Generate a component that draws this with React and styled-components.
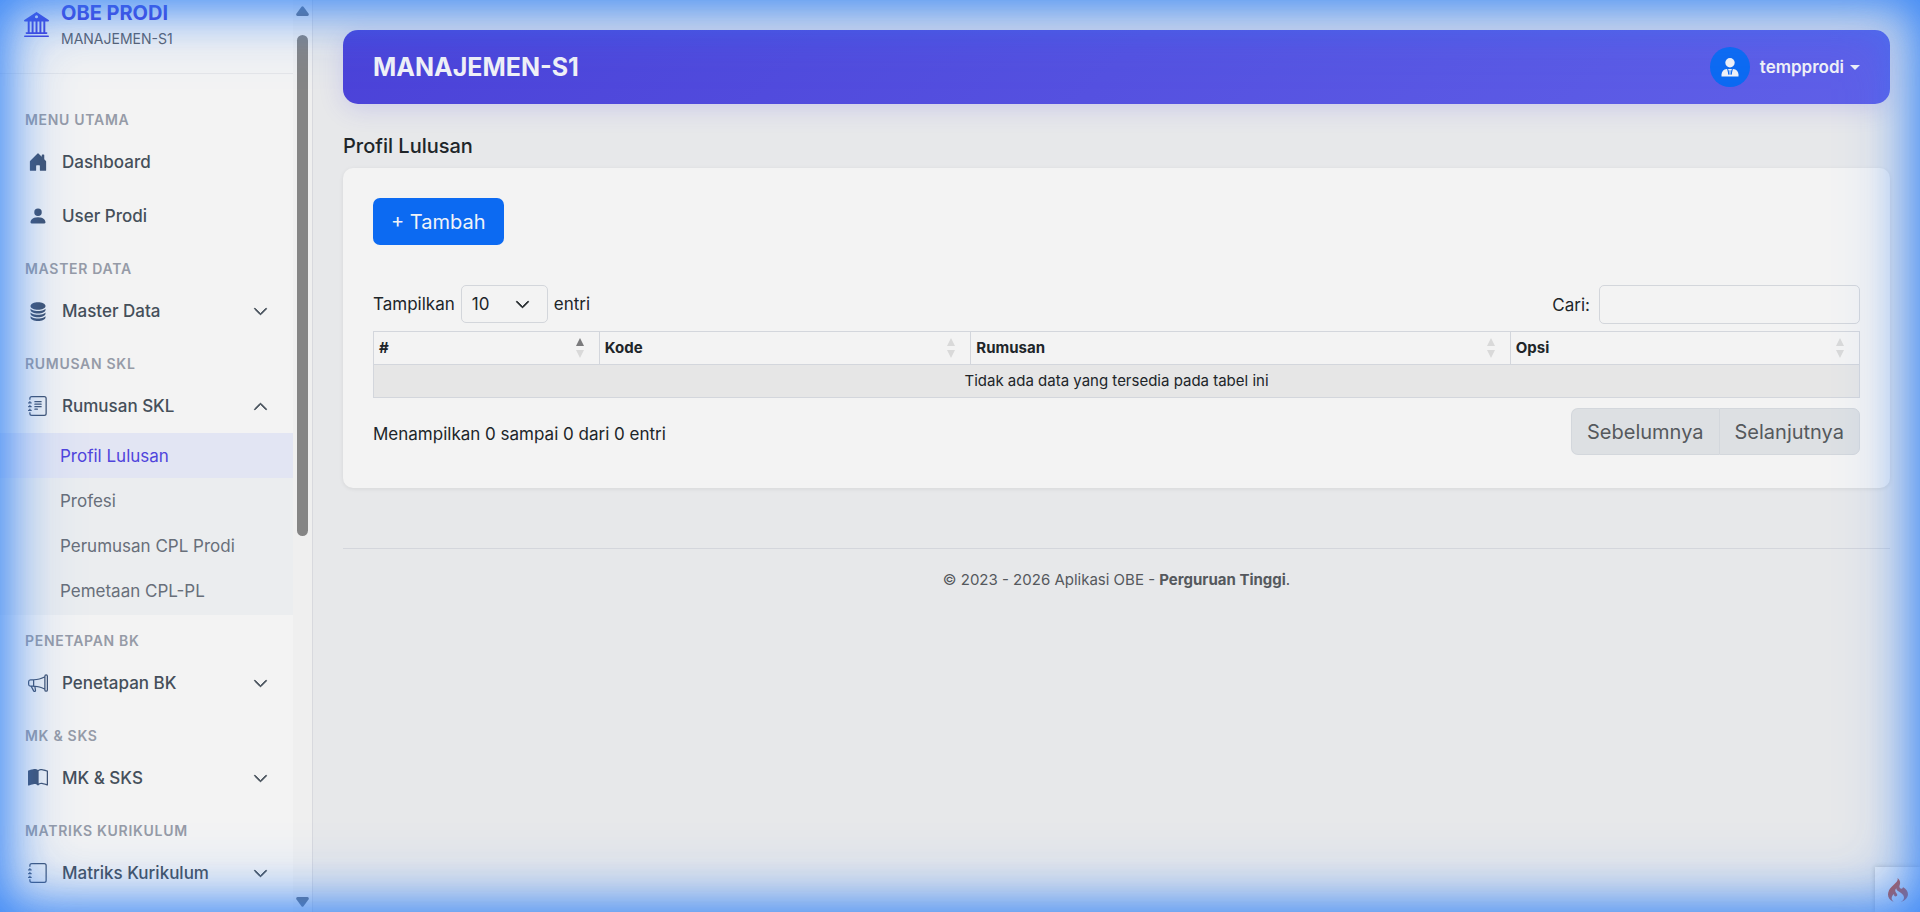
import React from 'react';
import styled, { createGlobalStyle } from 'styled-components';
import {
  BsBank2,
  BsBookHalf,
  BsChevronDown,
  BsChevronUp,
  BsDatabaseFill,
  BsHouseDoorFill,
  BsJournal,
  BsJournalText,
  BsMegaphone,
  BsPersonFill,
} from 'react-icons/bs';
import { SiCodeigniter } from 'react-icons/si';

const GlobalStyle = createGlobalStyle`
  * {
    box-sizing: border-box;
  }

  body {
    margin: 0;
    background: #e7e8ea;
    color: #202529;
    font-family: Inter, "Liberation Sans", sans-serif;
    font-size: 17px;
    line-height: 26px;
  }

  button,
  input,
  select {
    font: inherit;
    color: inherit;
  }

  a {
    color: inherit;
    text-decoration: none;
  }
`;

const Layout = styled.div`
  display: flex;
  align-items: flex-start;
  min-height: 100vh;
`;

const Glow = styled.div`
  position: fixed;
  inset: 0;
  z-index: 20;
  pointer-events: none;
  box-shadow:
    inset 0 0 75px rgba(50, 130, 246, 0.7),
    inset 0 0 46px rgba(50, 130, 246, 0.9);
`;

/* Sidebar */

const Sidebar = styled.aside`
  position: sticky;
  top: 0;
  display: flex;
  flex: 0 0 313px;
  height: 100vh;
  overflow: hidden;
  background: #f3f3f3;
  border-right: 1px solid #d8d9de;
`;

const SidebarContent = styled.div`
  flex: 1;
  display: flex;
  flex-direction: column;
  overflow: hidden;
`;

const Brand = styled.div`
  display: flex;
  flex: 0 0 74px;
  align-items: flex-start;
  gap: 12px;
  padding: 0 24px;
  border-bottom: 1px solid #e5e6e8;
  color: #4338d9;

  svg {
    flex: none;
    margin-top: 12px;
  }
`;

const BrandName = styled.strong`
  display: block;
  font-size: 20px;
  font-weight: 700;
  line-height: 26px;
`;

const BrandUnit = styled.small`
  display: block;
  color: #5b616b;
  font-size: 14px;
  line-height: 26px;
`;

const Nav = styled.nav`
  padding-top: 20px;
`;

const NavLabel = styled.div`
  padding: 16px 25px 5px;
  color: #969ba7;
  font-size: 14px;
  font-weight: 600;
  letter-spacing: 0.05em;
  line-height: 20px;
  text-transform: uppercase;
`;

const NavLink = styled.a`
  display: flex;
  align-items: center;
  gap: 12px;
  height: 54px;
  padding: 0 25px;
  color: #454f5a;
  font-weight: 500;
`;

const NavIcon = styled.span`
  display: flex;
  justify-content: center;
  width: 25px;
  color: #41526e;
  font-size: 20px;
`;

const NavText = styled.span`
  flex: 1;
`;

const SubMenu = styled.div`
  padding-bottom: 2px;
  background: #ebedef;
`;

const SubLink = styled.a`
  display: flex;
  align-items: center;
  height: 45px;
  padding-left: 60px;
  background: ${({ $active }) => ($active ? '#e2e5f3' : 'transparent')};
  color: ${({ $active }) => ($active ? '#5044dc' : '#686f7a')};
`;

const ScrollRail = styled.div`
  display: flex;
  flex: 0 0 19px;
  flex-direction: column;
  align-items: center;
  padding: 6px 0 5px;
  background: #efefef;
`;

const ScrollArrow = styled.svg`
  flex: none;
  width: 13px;
  height: 10px;
  fill: #68707c;
`;

const ScrollTrack = styled.div`
  flex: 1;
  width: 11px;
  padding: 19px 0;
`;

const ScrollThumb = styled.div`
  height: 59.4%;
  border-radius: 6px;
  background: #858585;
`;

/* Main column */

const Main = styled.main`
  flex: 1;
  min-width: 0;
  padding: 30px;
`;

const Topbar = styled.header`
  display: flex;
  align-items: center;
  justify-content: space-between;
  height: 74px;
  padding: 0 30px;
  border-radius: 15px;
  background: linear-gradient(135deg, #4b42d8, #5f60e8);
  box-shadow: 0 5px 25px rgba(79, 70, 229, 0.18);
  color: #f2f2f7;
`;

const TopbarTitle = styled.h1`
  margin: 0;
  font-size: 25px;
  font-weight: 700;
  line-height: 30px;
`;

const UserButton = styled.button`
  display: flex;
  align-items: center;
  padding: 0;
  border: 0;
  background: none;
  font-weight: 600;
  cursor: pointer;
`;

const Avatar = styled.span`
  display: flex;
  align-items: center;
  justify-content: center;
  width: 40px;
  height: 40px;
  margin-right: 10px;
  border-radius: 50%;
  background: #0c6af2;
`;

const Caret = styled.span`
  margin-left: 6px;
  border-top: 5px solid;
  border-right: 5px solid transparent;
  border-left: 5px solid transparent;
`;

const PageTitle = styled.h2`
  margin: 30px 0 9px;
  font-size: 20px;
  font-weight: 500;
  line-height: 25px;
`;

const Card = styled.section`
  padding: 30px;
  border-radius: 10px;
  background: #f3f3f3;
  box-shadow: 0 1px 4px rgba(0, 0, 0, 0.08);
`;

const AddButton = styled.button`
  height: 47px;
  padding: 0 18px;
  border: 0;
  border-radius: 7px;
  background: #0c6af2;
  color: #f0f3f8;
  font-size: 20px;
  cursor: pointer;
`;

const TableBar = styled.div`
  display: flex;
  align-items: flex-start;
  justify-content: space-between;
  margin: 40px 0 7px;
`;

const Field = styled.label`
  display: flex;
  align-items: center;
  gap: ${({ $gap }) => $gap}px;
`;

const SelectBox = styled.span`
  display: grid;
  align-items: center;

  select,
  svg {
    grid-area: 1 / 1;
  }

  svg {
    justify-self: end;
    margin-right: 18px;
    pointer-events: none;
  }
`;

const LengthSelect = styled.select`
  width: 87px;
  height: 38px;
  padding: 0 10px;
  appearance: none;
  border: 1px solid #d3d6db;
  border-radius: 5px;
  background: transparent;
`;

const SearchInput = styled.input`
  width: 261px;
  height: 39px;
  padding: 0 10px;
  border: 1px solid #d3d6db;
  border-radius: 5px;
  background: transparent;
`;

const Table = styled.table`
  width: 100%;
  border-collapse: collapse;
  table-layout: fixed;
  font-size: 15px;
  line-height: 22px;

  th,
  td {
    padding: 5px;
    border: 1px solid #d3d6dc;
  }

  td {
    background: #e6e6e6;
    text-align: center;
  }
`;

const HeadCell = styled.th`
  width: ${({ $width }) => $width};
  font-weight: 700;
  text-align: left;
`;

const HeadInner = styled.div`
  display: flex;
  align-items: center;
  justify-content: space-between;
  padding-right: 10px;
`;

const SortMark = styled.svg`
  width: 8px;
  height: 20px;
  fill: #d9d9d9;

  .active {
    fill: #7a7a7c;
  }
`;

const TableFoot = styled.div`
  display: flex;
  align-items: center;
  justify-content: space-between;
  margin: 10px 0 3px;
`;

const TableInfo = styled.div`
  padding-top: 4px;
`;

const Pager = styled.div`
  display: flex;
`;

const PageButton = styled.button`
  height: 47px;
  padding: 0 15px;
  border: 1px solid #d3d7dc;
  background: #dde0e3;
  color: #55595d;
  font-size: 20px;

  &:first-child {
    border-right: 0;
    border-radius: 7px 0 0 7px;
  }

  &:last-child {
    border-radius: 0 7px 7px 0;
  }
`;

const Footer = styled.footer`
  margin-top: 60px;
  padding-top: 18px;
  border-top: 1px solid #d4d6dc;
  color: #55585d;
  font-size: 15px;
  text-align: center;

  strong {
    font-weight: 700;
  }
`;

const DebugButton = styled.button`
  position: fixed;
  right: 0;
  bottom: 0;
  display: flex;
  align-items: center;
  justify-content: center;
  width: 45px;
  height: 45px;
  padding: 0;
  border: 0;
  background: #f3f3f3;
  box-shadow: 0 0 5px rgba(0, 0, 0, 0.2);
  color: #dd4814;
  font-size: 24px;
`;

const menu = [
  {
    label: 'Menu Utama',
    items: [
      { text: 'Dashboard', icon: BsHouseDoorFill },
      { text: 'User Prodi', icon: BsPersonFill },
    ],
  },
  {
    label: 'Master Data',
    items: [{ text: 'Master Data', icon: BsDatabaseFill, collapsible: true }],
  },
  {
    label: 'Rumusan SKL',
    items: [
      {
        text: 'Rumusan SKL',
        icon: BsJournalText,
        collapsible: true,
        children: ['Profil Lulusan', 'Profesi', 'Perumusan CPL Prodi', 'Pemetaan CPL-PL'],
      },
    ],
  },
  {
    label: 'Penetapan BK',
    items: [{ text: 'Penetapan BK', icon: BsMegaphone, collapsible: true }],
  },
  {
    label: 'MK & SKS',
    items: [{ text: 'MK & SKS', icon: BsBookHalf, collapsible: true }],
  },
  {
    label: 'Matriks Kurikulum',
    items: [{ text: 'Matriks Kurikulum', icon: BsJournal, collapsible: true }],
  },
];

const columns = [
  { title: '#', width: '15.2%', sorted: true },
  { title: 'Kode', width: '25%' },
  { title: 'Rumusan', width: '36.3%' },
  { title: 'Opsi', width: 'auto' },
];

function UserIcon() {
  return (
    <svg width="18" height="19" viewBox="0 0 18 19" fill="currentColor" aria-hidden="true">
      <circle cx="9" cy="4.8" r="4.7" />
      <path d="M.5 18.600v-2q.3-4.900 5.200-5.600h6.600q4.900.7 5.200 5.600v2z" />
      <path d="M6.600 10.800l1.300 5.700v-4.200M11.400 10.800l-1.300 5.700v-4.200" fill="none" stroke="#0c6af2" />
    </svg>
  );
}

function NavItem({ item, active }) {
  const Icon = item.icon;
  const Chevron = item.children ? BsChevronUp : BsChevronDown;

  return (
    <>
      <NavLink href="#">
        <NavIcon>
          <Icon />
        </NavIcon>
        <NavText>{item.text}</NavText>
        {item.collapsible && <Chevron size={15} strokeWidth={1} />}
      </NavLink>
      {item.children && (
        <SubMenu>
          {item.children.map((child) => (
            <SubLink key={child} href="#" $active={child === active}>
              {child}
            </SubLink>
          ))}
        </SubMenu>
      )}
    </>
  );
}

function SideMenu() {
  return (
    <Sidebar>
      <SidebarContent>
        <Brand>
          <BsBank2 size={25} />
          <div>
            <BrandName>OBE PRODI</BrandName>
            <BrandUnit>MANAJEMEN-S1</BrandUnit>
          </div>
        </Brand>
        <Nav>
          {menu.map((group) => (
            <div key={group.label}>
              <NavLabel>{group.label}</NavLabel>
              {group.items.map((item) => (
                <NavItem key={item.text} item={item} active="Profil Lulusan" />
              ))}
            </div>
          ))}
        </Nav>
      </SidebarContent>
      <ScrollRail aria-hidden="true">
        <ScrollArrow viewBox="0 0 13 10">
          <path d="M5.5 .8q1-1.2 2 0l5 6.7q1 2-1 2.500h-10q-2-.5-1-2.500z" />
        </ScrollArrow>
        <ScrollTrack>
          <ScrollThumb />
        </ScrollTrack>
        <ScrollArrow viewBox="0 0 13 10">
          <path d="M5.5 9.200q1 1.200 2 0l5-6.700q1-2-1-2.500h-10q-2 .5-1 2.500z" />
        </ScrollArrow>
      </ScrollRail>
    </Sidebar>
  );
}

function ProfileTable() {
  return (
    <Table>
      <thead>
        <tr>
          {columns.map(({ title, width, sorted }) => (
            <HeadCell key={title} $width={width} scope="col">
              <HeadInner>
                {title}
                <SortMark viewBox="0 0 8 20" aria-hidden="true">
                  <path className={sorted ? 'active' : undefined} d="M4 0l4 8H0z" />
                  <path d="M4 20l4-8H0z" />
                </SortMark>
              </HeadInner>
            </HeadCell>
          ))}
        </tr>
      </thead>
      <tbody>
        <tr>
          <td colSpan={4}>Tidak ada data yang tersedia pada tabel ini</td>
        </tr>
      </tbody>
    </Table>
  );
}

export default function App() {
  return (
    <>
      <GlobalStyle />
      <Layout>
        <SideMenu />
        <Main>
          <Topbar>
            <TopbarTitle>MANAJEMEN-S1</TopbarTitle>
            <UserButton type="button">
              <Avatar>
                <UserIcon />
              </Avatar>
              tempprodi
              <Caret />
            </UserButton>
          </Topbar>

          <PageTitle>Profil Lulusan</PageTitle>
          <Card>
            <AddButton type="button">+ Tambah</AddButton>
            <TableBar>
              <Field $gap={6}>
                Tampilkan
                <SelectBox>
                  <LengthSelect defaultValue="10">
                    <option>10</option>
                    <option>25</option>
                    <option>50</option>
                    <option>100</option>
                  </LengthSelect>
                  <BsChevronDown size={15} strokeWidth={1} />
                </SelectBox>
                entri
              </Field>
              <Field $gap={9}>
                Cari:
                <SearchInput type="search" />
              </Field>
            </TableBar>
            <ProfileTable />
            <TableFoot>
              <TableInfo>Menampilkan 0 sampai 0 dari 0 entri</TableInfo>
              <Pager>
                <PageButton type="button" disabled>Sebelumnya</PageButton>
                <PageButton type="button" disabled>Selanjutnya</PageButton>
              </Pager>
            </TableFoot>
          </Card>

          <Footer>
            © 2023 - 2026 Aplikasi OBE - <strong>Perguruan Tinggi</strong>.
          </Footer>
        </Main>
      </Layout>
      <DebugButton type="button" aria-label="Debug toolbar">
        <SiCodeigniter />
      </DebugButton>
      <Glow />
    </>
  );
}
